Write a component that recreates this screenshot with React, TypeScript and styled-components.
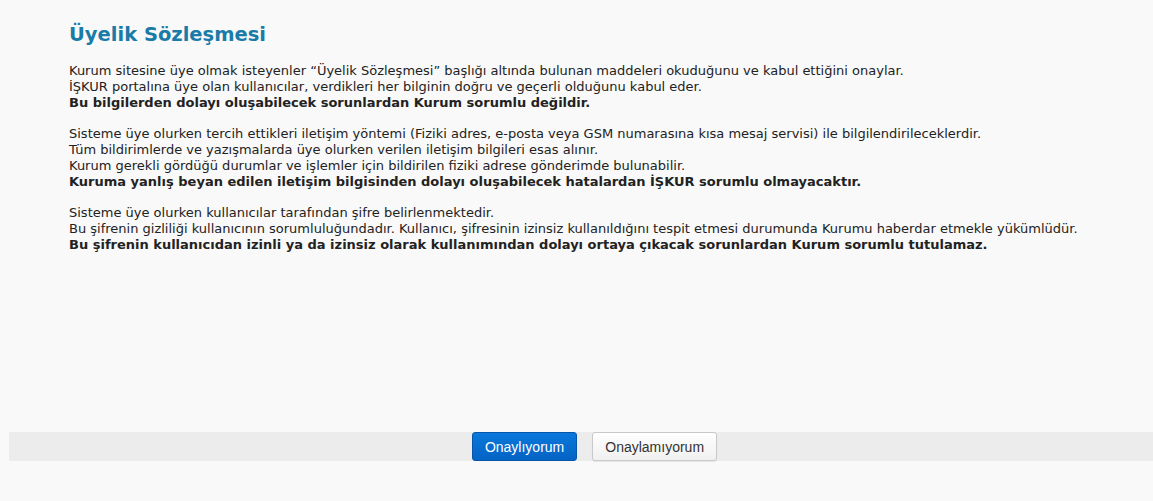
import React from 'react';
import styled, { createGlobalStyle } from 'styled-components';

const GlobalStyle = createGlobalStyle`
  html, body {
    margin: 0;
    padding: 0;
    background: #f9f9f9;
  }
  body {
    font-family: "DejaVu Sans", Verdana, sans-serif;
    color: #222;
  }
`;

interface Paragraph {
  lines: string[];
  strong: string;
}

const paragraphs: Paragraph[] = [
  {
    lines: [
      'Kurum sitesine üye olmak isteyenler “Üyelik Sözleşmesi” başlığı altında bulunan maddeleri okuduğunu ve kabul ettiğini onaylar.',
      'İŞKUR portalına üye olan kullanıcılar, verdikleri her bilginin doğru ve geçerli olduğunu kabul eder.',
    ],
    strong: 'Bu bilgilerden dolayı oluşabilecek sorunlardan Kurum sorumlu değildir.',
  },
  {
    lines: [
      'Sisteme üye olurken tercih ettikleri iletişim yöntemi (Fiziki adres, e-posta veya GSM numarasına kısa mesaj servisi) ile bilgilendirileceklerdir.',
      'Tüm bildirimlerde ve yazışmalarda üye olurken verilen iletişim bilgileri esas alınır.',
      'Kurum gerekli gördüğü durumlar ve işlemler için bildirilen fiziki adrese gönderimde bulunabilir.',
    ],
    strong: 'Kuruma yanlış beyan edilen iletişim bilgisinden dolayı oluşabilecek hatalardan İŞKUR sorumlu olmayacaktır.',
  },
  {
    lines: [
      'Sisteme üye olurken kullanıcılar tarafından şifre belirlenmektedir.',
      'Bu şifrenin gizliliği kullanıcının sorumluluğundadır. Kullanıcı, şifresinin izinsiz kullanıldığını tespit etmesi durumunda Kurumu haberdar etmekle yükümlüdür.',
    ],
    strong: 'Bu şifrenin kullanıcıdan izinli ya da izinsiz olarak kullanımından dolayı ortaya çıkacak sorunlardan Kurum sorumlu tutulamaz.',
  },
];

const App: React.FC = () => {
  return (
    <Page>
      <GlobalStyle />
      <Content>
        <Title>Üyelik Sözleşmesi</Title>
        {paragraphs.map((p, i) => (
          <Text key={i}>
            {p.lines.map((l, j) => (
              <Line key={j}>{l}</Line>
            ))}
            <Strong>{p.strong}</Strong>
          </Text>
        ))}
      </Content>
      <ActionBar>
        <Button $primary>Onaylıyorum</Button>
        <Button>Onaylamıyorum</Button>
      </ActionBar>
    </Page>
  );
};

const Page = styled.div`
  width: 100%;
  min-height: 501px;
  display: flex;
  flex-direction: column;
`;

const Content = styled.div`
  height: 432px;
  box-sizing: border-box;
  padding: 22px 20px 0 69px;
`;

const Title = styled.h1`
  margin: 0 0 15px;
  font-size: 19.5px;
  line-height: 26px;
  font-weight: bold;
  color: #1a7ba8;
`;

const Text = styled.div`
  font-size: 13px;
  line-height: 16px;
  margin-bottom: 15px;
`;

const Line = styled.div``;

const Strong = styled.div`
  font-weight: bold;
`;

const ActionBar = styled.div`
  margin: 0 0 0 9px;
  height: 29px;
  background: #ececec;
  display: flex;
  justify-content: center;
  gap: 15px;
  padding-left: 27px;
  box-sizing: border-box;
`;

const Button = styled.button<{ $primary?: boolean }>`
  font-family: "Liberation Sans", Arial, sans-serif;
  font-size: 14px;
  height: 29px;
  padding: 0 12px;
  border-radius: 3px;
  cursor: pointer;
  border: 1px solid ${(p) => (p.$primary ? '#0755a8' : '#c9c9c9')};
  color: ${(p) => (p.$primary ? '#fff' : '#333')};
  background: ${(p) =>
    p.$primary
      ? 'linear-gradient(#0a78dc, #0463c4)'
      : 'linear-gradient(#ffffff, #f0f0f0)'};
  box-shadow: ${(p) => (p.$primary ? 'none' : '0 1px 1px rgba(0,0,0,0.08)')};
  min-width: ${(p) => (p.$primary ? '105px' : '124px')};
`;

export default App;
